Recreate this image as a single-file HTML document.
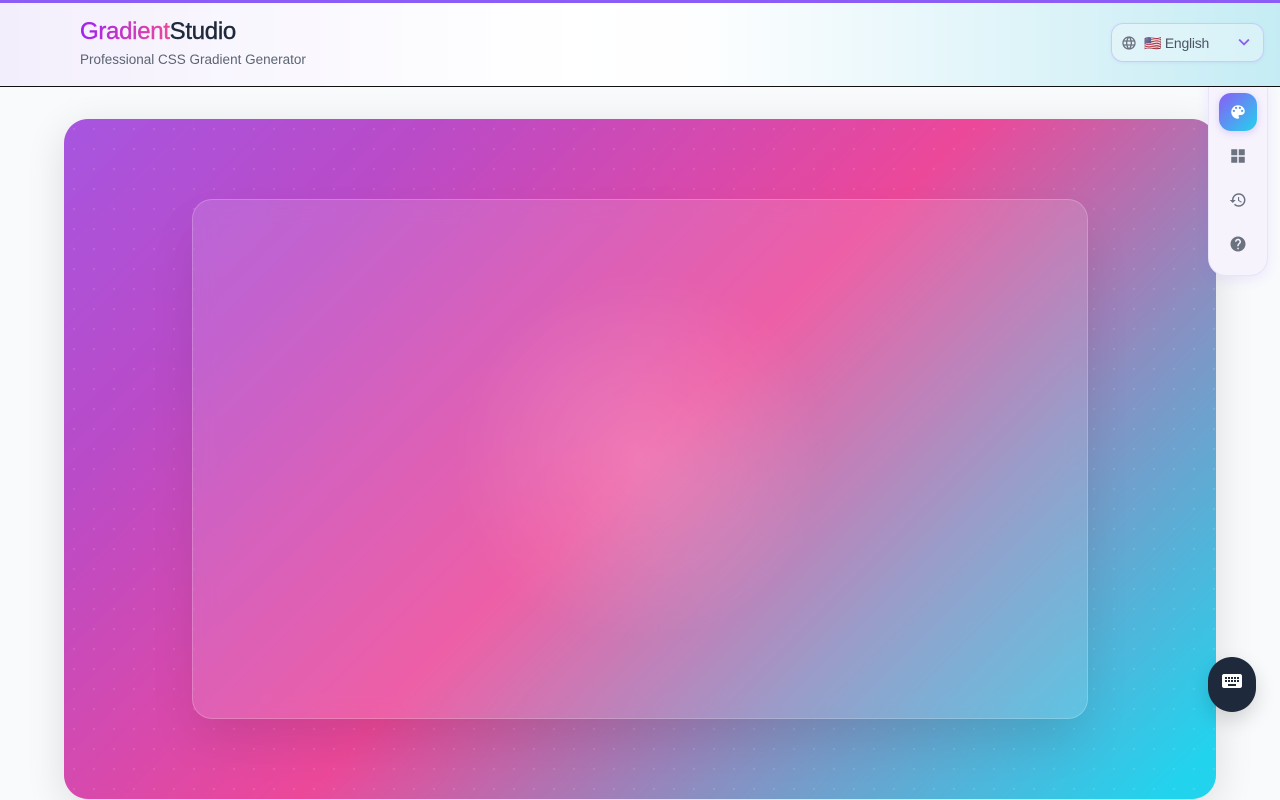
<!DOCTYPE html>
<html lang="en">
<head>
<meta charset="utf-8">
<title>GradientStudio</title>
<style>
html,body{margin:0;padding:0;width:1280px;height:800px;overflow:hidden;background:#f8fafc;font-family:"Liberation Sans",sans-serif}
*{box-sizing:border-box}
.abs{position:absolute}
#header{left:0;top:0;width:1280px;height:87px;z-index:5;border-top:3px solid #8b5cf6;border-bottom:1px solid #111;
background:linear-gradient(90deg,#f3eefc 0%,#f9f7fe 20%,#ffffff 45%,#fdfeff 55%,#c5ecf4 100%)}
#logo{left:80px;top:18px;font-size:24px;line-height:28px;font-weight:400;letter-spacing:-.3px;color:#1e293b;-webkit-text-stroke:.4px currentColor;white-space:nowrap}
#logo span{background:linear-gradient(90deg,#a020f0,#ec4899);-webkit-background-clip:text;background-clip:text;color:transparent;-webkit-text-stroke:.4px transparent}
#sub{left:80px;top:50px;font-size:13.5px;line-height:20px;color:#5b6472;letter-spacing:0;white-space:nowrap}
#lang{left:1111px;top:23px;width:153px;height:39px;border-radius:12px;border:1px solid #c9cdf6;background:rgba(255,255,255,.3);box-shadow:0 1px 3px rgba(139,92,246,.1)}
#lang-t{left:1144px;top:33px;font-size:14px;line-height:20px;color:#4b5563;letter-spacing:-.25px;white-space:nowrap;font-family:"Liberation Sans","Noto Color Emoji",sans-serif}
#grad{left:64px;top:119px;width:1152px;height:680px;border-radius:24px;overflow:hidden;
background:linear-gradient(135deg,#a755e0 0%,#b94bc8 20%,#ec4899 50%,#8890c2 72%,#22d3ee 97%);box-shadow:0 10px 40px rgba(0,0,0,.12)}
#dots{left:0;top:0;width:100%;height:100%;background-image:radial-gradient(circle at center,rgba(255,255,255,.1) 1px,transparent 1.4px);background-size:20px 20px}
#glass{left:128px;top:80px;width:896px;height:520px;border-radius:20px;border:1px solid rgba(255,255,255,.2);background:rgba(255,255,255,.13);-webkit-backdrop-filter:blur(10px);backdrop-filter:blur(10px);box-shadow:0 25px 50px -6px rgba(0,0,0,.11)}
#glow{left:128px;top:80px;width:896px;height:520px;border-radius:20px;background:radial-gradient(circle at 50% 50%,rgba(255,255,255,.17) 0,rgba(255,255,255,0) 190px)}
#side{left:1208px;top:80px;width:60px;height:196px;border-radius:0 0 18px 18px;background:#f6f3fd;border:1px solid #e9e3fb;box-shadow:0 4px 12px rgba(139,92,246,.1);z-index:4}
#active{left:1219px;top:93px;width:38px;height:38px;border-radius:12px;background:linear-gradient(135deg,#8b5cf6,#22d3ee);box-shadow:0 2px 8px rgba(139,92,246,.25);z-index:4}
#kbd{left:1208px;top:657px;width:48px;height:55px;border-radius:24px;background:#1e293b;box-shadow:0 8px 20px rgba(0,0,0,.15);z-index:4}
svg{position:absolute;display:block;z-index:6}
</style>
</head>
<body>
<div id="grad" class="abs">
  <div id="dots" class="abs"></div>
  <div id="glass" class="abs"></div>
  <div id="glow" class="abs"></div>
</div>
<div id="side" class="abs"></div>
<div id="active" class="abs"></div>
<div id="kbd" class="abs"></div>
<div id="header" class="abs"></div>
<div id="logo" class="abs" style="z-index:6"><span>Gradient</span>Studio</div>
<div id="sub" class="abs" style="z-index:6">Professional CSS Gradient Generator</div>
<div id="lang" class="abs" style="z-index:6"></div>
<div id="lang-t" class="abs" style="z-index:6">🇺🇸 English</div>

<svg style="left:1121px;top:35px" width="16" height="16" viewBox="0 0 24 24" fill="#6b7280"><path d="M11.99 2C6.47 2 2 6.48 2 12s4.47 10 9.99 10C17.52 22 22 17.52 22 12S17.52 2 11.99 2zm6.93 6h-2.95c-.32-1.25-.78-2.45-1.38-3.56 1.84.63 3.37 1.91 4.33 3.56zM12 4.04c.83 1.2 1.48 2.53 1.91 3.96h-3.82c.43-1.43 1.08-2.76 1.91-3.96zM4.26 14C4.1 13.36 4 12.69 4 12s.1-1.36.26-2h3.38c-.08.66-.14 1.32-.14 2 0 .68.06 1.34.14 2H4.26zm.82 2h2.95c.32 1.25.78 2.45 1.38 3.56-1.84-.63-3.37-1.9-4.33-3.56zm2.95-8H5.08c.96-1.66 2.49-2.93 4.33-3.56C8.81 5.55 8.35 6.75 8.03 8zM12 19.96c-.83-1.2-1.48-2.53-1.91-3.96h3.82c-.43 1.43-1.08 2.76-1.91 3.96zM14.34 14H9.66c-.09-.66-.16-1.32-.16-2 0-.68.07-1.35.16-2h4.68c.09.65.16 1.32.16 2 0 .68-.07 1.34-.16 2zm.25 5.56c.6-1.11 1.06-2.31 1.38-3.56h2.95c-.96 1.65-2.49 2.93-4.33 3.56zM16.36 14c.08-.66.14-1.32.14-2 0-.68-.06-1.34-.14-2h3.38c.16.64.26 1.31.26 2s-.1 1.36-.26 2h-3.38z"/></svg>
<svg style="left:1233px;top:31px" width="22" height="22" viewBox="0 0 24 24" fill="#8b5cf6"><path d="M16.59 8.59L12 13.17 7.41 8.59 6 10l6 6 6-6z"/></svg>
<svg style="left:1229px;top:103px" width="18" height="18" viewBox="0 0 24 24" fill="#fff"><path d="M12 3c-4.97 0-9 4.03-9 9s4.03 9 9 9c.83 0 1.5-.67 1.5-1.5 0-.39-.15-.74-.39-1.01-.23-.26-.38-.61-.38-.99 0-.83.67-1.5 1.5-1.5H16c2.76 0 5-2.24 5-5 0-4.42-4.03-8-9-8zm-5.5 9c-.83 0-1.5-.67-1.5-1.5S5.67 9 6.5 9 8 9.67 8 10.5 7.33 12 6.5 12zm3-4C8.67 8 8 7.33 8 6.5S8.67 5 9.5 5s1.5.67 1.5 1.5S10.33 8 9.5 8zm5 0c-.83 0-1.5-.67-1.5-1.5S13.67 5 14.5 5s1.5.67 1.5 1.5S15.33 8 14.5 8zm3 4c-.83 0-1.5-.67-1.5-1.5S16.67 9 17.5 9s1.5.67 1.5 1.5-.67 1.5-1.5 1.5z"/></svg>
<svg style="left:1229px;top:147px" width="18" height="18" viewBox="0 0 24 24" fill="#6b7280"><path d="M3 3v8h8V3H3zm10 0v8h8V3h-8zM3 13v8h8v-8H3zm10 0v8h8v-8h-8z"/></svg>
<svg style="left:1229px;top:191px" width="18" height="18" viewBox="0 0 24 24" fill="#6b7280"><path d="M13 3c-4.97 0-9 4.03-9 9H1l3.89 3.89.07.14L9 12H6c0-3.87 3.13-7 7-7s7 3.13 7 7-3.13 7-7 7c-1.93 0-3.68-.79-4.94-2.06l-1.42 1.42C8.27 19.99 10.51 21 13 21c4.97 0 9-4.03 9-9s-4.03-9-9-9zm-1 5v5l4.28 2.54.72-1.21-3.5-2.08V8H12z"/></svg>
<svg style="left:1229px;top:235px" width="18" height="18" viewBox="0 0 24 24" fill="#6b7280"><path d="M12 2C6.48 2 2 6.48 2 12s4.48 10 10 10 10-4.48 10-10S17.52 2 12 2zm1 17h-2v-2h2v2zm2.07-7.75l-.9.92C13.45 12.9 13 13.5 13 15h-2v-.5c0-1.1.45-2.1 1.17-2.83l1.24-1.26c.37-.36.59-.86.59-1.41 0-1.1-.9-2-2-2s-2 .9-2 2H8c0-2.21 1.79-4 4-4s4 1.79 4 4c0 .88-.36 1.68-.93 2.25z"/></svg>
<svg style="left:1220px;top:669px" width="24" height="24" viewBox="0 0 24 24" fill="#fff"><path d="M20 5H4c-1.1 0-1.99.9-1.99 2L2 17c0 1.1.9 2 2 2h16c1.1 0 2-.9 2-2V7c0-1.1-.9-2-2-2zm-9 3h2v2h-2V8zm0 3h2v2h-2v-2zM8 8h2v2H8V8zm0 3h2v2H8v-2zm-1 2H5v-2h2v2zm0-3H5V8h2v2zm9 7H8v-2h8v2zm0-4h-2v-2h2v2zm0-3h-2V8h2v2zm3 3h-2v-2h2v2zm0-3h-2V8h2v2z"/></svg>
</body>
</html>
